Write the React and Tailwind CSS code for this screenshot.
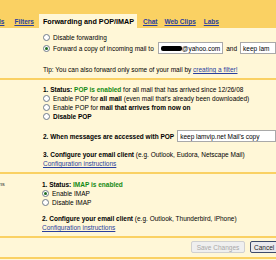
const Radio = ({ checked }) => (
  <span className="inline-flex w-[7px] h-[7px] shrink-0 items-center justify-center rounded-full border border-[#6f7b8a] bg-white">
    {checked && <span className="block w-[3px] h-[3px] rounded-full bg-[#1d6b1d]" />}
  </span>
);

const Line = () => <div className="h-[2px] bg-[#fad163]" />;

const Option = ({ checked, children }) => (
  <div className="flex items-center gap-[3px] h-[9px]">
    <Radio checked={checked} />
    <span>{children}</span>
  </div>
);

const Link = ({ children }) => (
  <span className="text-[#2a3f9e] underline">{children}</span>
);

const App = () => {
  return (
    <div
      className="w-[276px] h-[260px] overflow-hidden bg-[#fff7d7] text-[6.5px] leading-[9px] text-black whitespace-nowrap"
      style={{ fontFamily: '"Liberation Sans", Arial, sans-serif' }}
    >
      {/* top band */}
      <div className="h-[14px] bg-[#fad163]" />

      {/* tabs */}
      <div className="flex h-[14px] bg-[#fad163] font-bold items-end">
        <span className="text-[#2a3f9e] underline h-[14px] leading-[15px] ml-[-1px]">ls</span>
        <span className="text-[#2a3f9e] underline h-[14px] leading-[15px] ml-[10px]">Filters</span>
        <span className="bg-[#fff7d7] h-[14px] leading-[15px] ml-[5px] pl-[4px] pr-[3px] text-[7.2px]">
          Forwarding and POP/IMAP
        </span>
        <span className="text-[#2a3f9e] underline h-[14px] leading-[15px] ml-[6px]">Chat</span>
        <span className="text-[#2a3f9e] underline h-[14px] leading-[15px] ml-[7px]">Web Clips</span>
        <span className="text-[#2a3f9e] underline h-[14px] leading-[15px] ml-[8px]">Labs</span>
      </div>

      {/* forwarding */}
      <div className="pl-[43px] pt-[5px] pb-[4px]">
        <Option>Disable forwarding</Option>
        <div className="flex items-center gap-[3px] h-[12px]">
          <Radio checked />
          <span>Forward a copy of incoming mail to</span>
          <span className="flex items-center h-[12px] w-[69px] ml-[1px] border border-[#a9a9a9] bg-white px-[2px]">
            <span className="block w-[21px] h-[5px] bg-black rounded-[2px]" />
            <span>@yahoo.com</span>
          </span>
          <span>and</span>
          <span className="flex items-center h-[12px] w-[40px] border border-[#a9a9a9] bg-white px-[2px] overflow-hidden">
            keep lam
          </span>
        </div>
        <div className="mt-[11px] h-[9px]">
          Tip: You can also forward only some of your mail by <Link>creating a filter!</Link>
        </div>
      </div>
      <Line />

      {/* POP */}
      <div className="pl-[43px] pt-[5px] pb-[4px]">
        <div className="h-[9px]">
          <b>1. Status: </b>
          <b className="text-[#138a13]">POP is enabled</b> for all mail that has arrived since 12/26/08
        </div>
        <Option>
          Enable POP for <b>all mail</b> (even mail that's already been downloaded)
        </Option>
        <Option>
          Enable POP for <b>mail that arrives from now on</b>
        </Option>
        <Option>
          <b>Disable POP</b>
        </Option>
        <div className="flex items-center gap-[3px] h-[12px] mt-[9px]">
          <b>2. When messages are accessed with POP</b>
          <span className="flex items-center h-[12px] w-[100px] border border-[#a9a9a9] bg-white px-[2px] overflow-hidden">
            keep lamvip.net Mail's copy
          </span>
        </div>
        <div className="mt-[8px] h-[9px]">
          <b>3. Configure your email client</b> (e.g. Outlook, Eudora, Netscape Mail)
        </div>
        <div className="h-[9px]">
          <Link>Configuration instructions</Link>
        </div>
      </div>
      <Line />

      {/* IMAP */}
      <div className="flex pt-[6px] pb-[4px]">
        <div className="w-[43px] shrink-0 text-[5.5px] text-[#333] ml-[-1px]">ns</div>
        <div>
          <div className="h-[9px]">
            <b>1. Status: </b>
            <b className="text-[#138a13]">IMAP is enabled</b>
          </div>
          <Option checked>Enable IMAP</Option>
          <Option>Disable IMAP</Option>
          <div className="mt-[7px] h-[9px]">
            <b>2. Configure your email client</b> (e.g. Outlook, Thunderbird, iPhone)
          </div>
          <div className="h-[9px]">
            <Link>Configuration instructions</Link>
          </div>
        </div>
      </div>
      <Line />

      {/* buttons */}
      <div className="flex justify-end gap-[5px] pt-[3px] pb-[4px] mr-[-8px]">
        <span className="flex items-center justify-center h-[12px] w-[54px] rounded-[2px] border border-[#d0d0d0] bg-[#efefef] text-[#a8a8a8]">
          Save Changes
        </span>
        <span className="flex items-center h-[12px] w-[34px] rounded-[2px] border border-[#3e4a6b] bg-[#e9e9ee] pl-[3px] font-medium text-[#222]">
          Cancel
        </span>
      </div>
      <Line />
    </div>
  );
};

export default App;
